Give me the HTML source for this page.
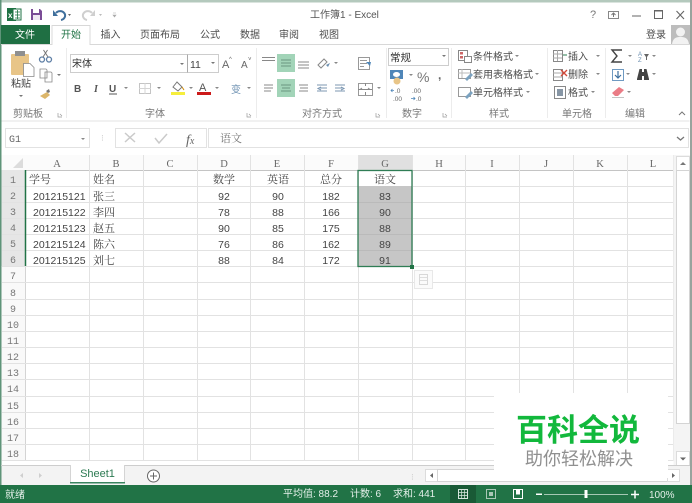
<!DOCTYPE html>
<html><head><meta charset="utf-8"><style>
html,body{margin:0;padding:0;background:#fff;width:692px;height:503px;overflow:hidden}
svg{display:block;position:absolute;left:0;top:0;filter:blur(.35px)}
text{font-family:"Liberation Sans","Noto Sans CJK SC",sans-serif;font-size:10px;fill:#4c4c4c}
.r{font-family:"Liberation Serif","Noto Serif CJK SC",serif;font-size:11px;fill:#444}
.n{font-family:"Liberation Sans",sans-serif;font-size:10.5px;fill:#444}
.h{font-family:"Liberation Serif","Noto Serif CJK SC",serif;font-size:10.5px;fill:#666;text-anchor:middle}
.rh{font-family:"Liberation Mono",monospace;font-size:10px;fill:#777;text-anchor:middle}
.m{text-anchor:middle}
.g{stroke:#e2e2e2;stroke-width:1}
</style></head><body>
<svg width="692" height="503" viewBox="0 0 692 503">
<rect width="692" height="503" fill="#fff"/>
<rect x="0" y="0" width="692" height="2.5" fill="#b4c9bd"/>
<rect x="0" y="0" width="1.5" height="503" fill="#5f9479"/>
<rect x="690" y="0" width="2" height="503" fill="#98a39d"/>

<!-- QAT -->
<rect x="7" y="8" width="9" height="13" fill="#1f7244"/><rect x="13" y="9" width="8" height="11" fill="#fff" stroke="#1f7244"/>
<path d="M15 12h5M15 15h5M15 18h5M17.500 10v9" stroke="#1f7244" stroke-width=".8"/>
<text x="8" y="18" style="font-size:8px;font-weight:bold;fill:#fff">x</text>
<path d="M31 9h9l2 2v9H31z" fill="#7a4c96"/><rect x="33" y="9" width="6" height="4" fill="#fff"/><rect x="33" y="15" width="7" height="5" fill="#efe8f3"/>
<path d="M56 13a5 4.500 0 1 1 5 7" fill="none" stroke="#3f6f9c" stroke-width="2"/><path d="M53 10v6h5z" fill="#3f6f9c"/>
<path d="M68 14l3 0-1.500 2z" fill="#666"/>
<path d="M92 13a5 4.500 0 1 0-5 7" fill="none" stroke="#cfcfcf" stroke-width="2"/><path d="M95 10v6h-5z" fill="#cfcfcf"/>
<path d="M99 14l3 0-1.500 2z" fill="#bbb"/>
<path d="M113 13h3M113 15l3 0-1.500 2z" stroke="#aaa" stroke-width=".6" fill="#aaa"/>
<text x="310" y="18" style="font-size:10px;fill:#555">工作簿1 - Excel</text>

<!-- window controls -->
<text x="590" y="18" style="font-size:11px;fill:#777">?</text>
<rect x="608.500" y="11.500" width="10" height="7" fill="none" stroke="#888"/><path d="M613.500 17v-4M611.500 15l2-2 2 2" fill="none" stroke="#777"/>
<rect x="632" y="15.500" width="9" height="1" fill="#666"/>
<rect x="654.500" y="10.500" width="8" height="8" fill="none" stroke="#666"/><rect x="654" y="10" width="9" height="1.500" fill="#666"/>
<path d="M676.500 11l7.500 8M684 11l-7.500 8" stroke="#666" stroke-width="1.100"/>

<!-- tabs -->
<rect x="1" y="25" width="49" height="20" fill="#1f6f43"/>
<text x="25" y="38" class="m" style="fill:#fff">文件</text>
<path d="M52 45V25.500H90V45" fill="#fff" stroke="#d8d8d8"/>
<line x1="1" y1="44.500" x2="52" y2="44.500" stroke="#d8d8d8"/><line x1="90" y1="44.500" x2="690" y2="44.500" stroke="#d8d8d8"/>
<text x="71" y="38" class="m" style="fill:#217346">开始</text>
<text x="110.500" y="38" class="m">插入</text>
<text x="160" y="38" class="m">页面布局</text>
<text x="210" y="38" class="m">公式</text>
<text x="250" y="38" class="m">数据</text>
<text x="289" y="38" class="m">审阅</text>
<text x="329" y="38" class="m">视图</text>
<text x="656" y="38" class="m">登录</text>
<rect x="671" y="25" width="19" height="19" fill="#bdbdbd"/>
<circle cx="680.500" cy="32" r="4.500" fill="#f2f2f2"/><path d="M672 44c1-6 4-7 8.500-7s7.500 1 8.500 7z" fill="#f2f2f2"/>

<!-- ribbon -->
<rect x="1.500" y="120" width="688" height="2" fill="#f1f1f1"/>
<g stroke="#ececec"><line x1="66.500" y1="48" x2="66.500" y2="118"/><line x1="256.500" y1="48" x2="256.500" y2="118"/><line x1="386.500" y1="48" x2="386.500" y2="118"/><line x1="451.500" y1="48" x2="451.500" y2="118"/><line x1="547.500" y1="48" x2="547.500" y2="118"/><line x1="605.500" y1="48" x2="605.500" y2="118"/></g>

<!-- clipboard -->
<rect x="11" y="54" width="18" height="21" rx="1" fill="#e8c588"/>
<rect x="15" y="51" width="10" height="5" fill="#8f8f8f"/>
<path d="M23.500 63.500h6.500l4 4v9H23.500z" fill="#fff" stroke="#888" stroke-width=".8"/>
<text x="21" y="87" class="m" style="fill:#444">粘贴</text>
<path d="M19 95l4 0-2 2z" fill="#777"/>
<circle cx="42" cy="59.500" r="2.500" fill="none" stroke="#5e7fa5" stroke-width="1.300"/><circle cx="49" cy="59.500" r="2.500" fill="none" stroke="#5e7fa5" stroke-width="1.300"/>
<path d="M43 57l4.500-7M48 57l-4.500-7" stroke="#777" stroke-width="1"/>
<path d="M40 69h6l1 1v8h-7z M45 72h6l1 1v9h-7z" fill="#fff" stroke="#888" stroke-width=".8"/>
<path d="M57 74l4 0-2 2z" fill="#777"/>
<path d="M40 96l7-4 3 3-5 4z" fill="#dcb66a"/><path d="M46 91l3-2 1 3-2 1z" fill="#777"/>
<text x="28" y="117" class="m" style="fill:#777">剪贴板</text>
<path d="M58 113v4h4M60 114l2 2" fill="none" stroke="#999" stroke-width=".7"/>

<!-- font -->
<rect x="70.500" y="54.500" width="148" height="18" fill="#fff" stroke="#cdcdcd"/>
<line x1="187.500" y1="54.500" x2="187.500" y2="72.500" stroke="#aaa"/>
<text x="72" y="67" style="font-size:10px;fill:#333">宋体</text>
<path d="M180 63l4 0-2 2z" fill="#777"/>
<text x="190" y="68" style="font-size:10.500px;fill:#444">11</text>
<path d="M211 62l4 0-2 2z" fill="#777"/>
<text x="222" y="68" style="font-size:11px;fill:#666">A</text><text x="229" y="61" style="font-size:6px;fill:#666">^</text>
<text x="241" y="68" style="font-size:10px;fill:#666">A</text><text x="248" y="61" style="font-size:6px;fill:#666">˅</text>
<text x="74" y="92" style="font-size:10px;font-weight:bold;fill:#555">B</text>
<text x="94" y="92" style="font-size:10px;font-style:italic;fill:#555;font-family:'Liberation Serif',serif;font-weight:bold">I</text>
<text x="109" y="92" style="font-size:10px;fill:#555;font-weight:bold">U</text><line x1="109" y1="94" x2="117" y2="94" stroke="#555"/>
<path d="M124 87l4 0-2 2z" fill="#888"/>
<rect x="139.500" y="83.500" width="11" height="10" fill="none" stroke="#c4c4c4"/><path d="M145 83v11M139 88.500h12" stroke="#d4d4d4"/>
<path d="M157 87l4 0-2 2z" fill="#888"/>
<path d="M177 82l5 5-4 4-5-4z" fill="none" stroke="#777"/><path d="M182 87l2 3" stroke="#c80" stroke-width="1"/>
<rect x="171" y="92" width="14" height="3" fill="#f6ee3c"/>
<path d="M189 87l4 0-2 2z" fill="#888"/>
<text x="199" y="91" style="font-size:11px;fill:#555">A</text>
<rect x="197" y="92" width="14" height="3" fill="#cc1a1a"/>
<path d="M215 87l4 0-2 2z" fill="#888"/>
<text x="231" y="93" style="font-size:10px;fill:#6b8fb0">变</text>
<path d="M247 87l4 0-2 2z" fill="#888"/>
<text x="155" y="117" class="m" style="fill:#777">字体</text>
<path d="M247 113v4h4M249 114l2 2" fill="none" stroke="#999" stroke-width=".7"/>

<!-- alignment -->
<rect x="277" y="54" width="18" height="18" fill="#a2d4b8"/>
<rect x="277" y="79" width="18" height="18" fill="#a2d4b8"/>
<g stroke="#888" stroke-width="1" fill="none">
<path d="M262 57.500h13M262 60.500h13"/>
<path d="M298 62h11M298 65h11M298 68h11"/>
<path d="M264 85h9M264 88h9M264 91h7"/>
<path d="M299 85h9M300 88h8M299 91h9"/>
</g>
<g stroke="#6a9680" stroke-width="1" fill="none"><path d="M281 60h10M281 63h10M281 66h10"/><path d="M281 85h10M282 88h8M281 91h10"/></g>
<path d="M318 65l6-6 3 3-6 6z" fill="none" stroke="#888"/><path d="M326 65l4-2-2 4z" fill="#6b8fb0"/>
<path d="M334 62l4 0-2 2z" fill="#888"/>
<g stroke="#7c97b2" fill="none"><path d="M317 85h10M320 88h7M317 91h10M321 87l-3 1.500 3 1.500"/><path d="M335 85h10M335 88h7M335 91h10M341 87l3 1.500-3 1.500"/></g>
<rect x="358.500" y="57.500" width="11" height="12" fill="#fff" stroke="#999"/><path d="M360 60.500h7M360 63.500h7M360 66.500h4" stroke="#999"/><path d="M366 62h5l-1 4z" fill="#4f86b8"/>
<rect x="358.500" y="83.500" width="14" height="12" fill="#fff" stroke="#999"/><path d="M358 89.500h14M360 89.500l2-1.500M370 89.500l-2-1.500M365.500 83v3M365.500 92v3" stroke="#888"/>
<path d="M377 87l4 0-2 2z" fill="#888"/>
<text x="322" y="117" class="m" style="fill:#777">对齐方式</text>
<path d="M376 113v4h4M378 114l2 2" fill="none" stroke="#999" stroke-width=".7"/>

<!-- number -->
<rect x="388.500" y="48.500" width="60" height="17" fill="#fff" stroke="#cdcdcd"/>
<text x="390" y="61" style="font-size:10.500px;fill:#333">常规</text>
<path d="M442 55l4 0-2 2z" fill="#777"/>
<rect x="390" y="70" width="13" height="9" fill="#4f86b8"/><ellipse cx="396.500" cy="74.500" rx="3.500" ry="2.500" fill="#fff"/>
<circle cx="397" cy="81" r="3.500" fill="#e8c588"/>
<path d="M409 74l4 0-2 2z" fill="#888"/>
<text x="417" y="82" style="font-size:14px;fill:#777">%</text>
<text x="438" y="79" style="font-size:12px;font-weight:bold;fill:#666">,</text>
<path d="M391 90.500h3M392.500 89l-1.500 1.500 1.500 1.500" stroke="#4f86b8" fill="none" stroke-width=".8"/>
<text x="395" y="93" style="font-size:6.500px;fill:#666">.0</text><text x="393" y="101" style="font-size:6.500px;fill:#666">.00</text>
<text x="412" y="93" style="font-size:6.500px;fill:#666">.00</text><text x="416" y="101" style="font-size:6.500px;fill:#666">.0</text>
<path d="M411 98.500h4M413.500 97l1.500 1.500-1.500 1.500" stroke="#4f86b8" fill="none" stroke-width=".8"/>
<text x="412" y="117" class="m" style="fill:#777">数字</text>
<path d="M443 113v4h4M445 114l2 2" fill="none" stroke="#999" stroke-width=".7"/>

<!-- styles -->
<rect x="458.500" y="50.500" width="9" height="10" fill="#fff" stroke="#888"/><rect x="460" y="52" width="3" height="2.500" fill="#c66"/><rect x="460" y="56" width="3" height="2.500" fill="#c66"/><rect x="464.500" y="56.500" width="7" height="6" fill="#fff" stroke="#888"/>
<text x="473" y="60" style="font-size:10px">条件格式</text><path d="M515 55l4 0-2 2z" fill="#888"/>
<rect x="458.500" y="69.500" width="12" height="9" fill="#fff" stroke="#999"/><path d="M458 73h12M462 69v9" stroke="#bbb"/><path d="M465 79l6-6 2 2-6 6z" fill="#7ba2c0"/>
<text x="473" y="78" style="font-size:10px">套用表格格式</text><path d="M535 73l4 0-2 2z" fill="#888"/>
<rect x="458.500" y="87.500" width="12" height="9" fill="#fff" stroke="#999"/><path d="M465 97l6-6 2 2-6 6z" fill="#7ba2c0"/>
<text x="473" y="96" style="font-size:10px">单元格样式</text><path d="M526 91l4 0-2 2z" fill="#888"/>
<text x="499" y="117" class="m" style="fill:#777">样式</text>

<!-- cells -->
<rect x="553.500" y="50.500" width="9" height="11" fill="#fff" stroke="#888"/><path d="M553 54h9M553 58h9M557.500 50v11" stroke="#aaa"/><path d="M563 55h4" stroke="#5c9a78" stroke-width="1.300"/>
<text x="568" y="60" style="font-size:10px">插入</text><path d="M596 55l4 0-2 2z" fill="#888"/>
<rect x="553.500" y="69.500" width="9" height="11" fill="#fff" stroke="#888"/><path d="M553 73h9M553 77h9" stroke="#aaa"/><path d="M561 70l6 6M567 70l-6 6" stroke="#d3493a" stroke-width="1.400"/>
<text x="568" y="78" style="font-size:10px">删除</text><path d="M596 73l4 0-2 2z" fill="#888"/>
<rect x="554.500" y="86.500" width="11" height="12" fill="#fff" stroke="#888"/><rect x="557" y="89" width="6" height="7" fill="#8796a5"/>
<text x="568" y="96" style="font-size:10px">格式</text><path d="M591 91l4 0-2 2z" fill="#888"/>
<text x="577" y="117" class="m" style="fill:#777">单元格</text>

<!-- editing -->
<path d="M622 50h-10l5 6-5 6h10" fill="none" stroke="#444" stroke-width="1.400"/>
<path d="M628 55l4 0-2 2z" fill="#888"/>
<text x="638" y="56" style="font-size:6px;fill:#6b8fb0">A</text><text x="638" y="62" style="font-size:6px;fill:#6b8fb0">Z</text>
<path d="M644 54h5l-2 3v3h-1v-3z" fill="#666"/><path d="M652 55l4 0-2 2z" fill="#888"/>
<rect x="612.500" y="69.500" width="11" height="11" fill="#fff" stroke="#6f9ac2"/><path d="M618 71v7M615 75l3 3 3-3" fill="none" stroke="#3c6f9e" stroke-width="1.200"/>
<path d="M626 73l4 0-2 2z" fill="#888"/>
<path d="M637 79l2.500-10h2.500v3h2v-3h2.500l2.500 10v1h-5v-4h-2v4h-5z" fill="#444"/><path d="M652 73l4 0-2 2z" fill="#888"/>
<path d="M612 93l7-6 5 3-6 6h-3z" fill="#ea7c86"/><line x1="612" y1="97.500" x2="624" y2="97.500" stroke="#c4c4c4"/>
<path d="M627 91l4 0-2 2z" fill="#888"/>
<text x="635" y="117" class="m" style="fill:#777">编辑</text>
<path d="M679 115l3-3 3 3" fill="none" stroke="#777"/>

<!-- formula bar -->
<rect x="5.500" y="128.500" width="84" height="19" fill="#fff" stroke="#e2e2e2"/>
<text x="9" y="142" style="font-family:'Liberation Mono',monospace;font-size:10px;fill:#666">G1</text>
<path d="M81 138l4 0-2 2z" fill="#888"/>
<text x="101" y="141" style="font-size:9px;fill:#ccc">⁝</text>
<rect x="115.500" y="128.500" width="91" height="19" fill="#fff" stroke="#e2e2e2"/>
<path d="M125 133l10 9M135 133l-10 9" stroke="#cacaca" stroke-width="1.500"/>
<path d="M155 138l4 5 8-9" fill="none" stroke="#cacaca" stroke-width="1.500"/>
<text x="186" y="144" style="font-family:'Liberation Serif',serif;font-style:italic;font-size:14px;fill:#666">f<tspan style="font-size:10px">x</tspan></text>
<rect x="208.500" y="128.500" width="480" height="19" fill="#fff" stroke="#e2e2e2"/>
<text x="220" y="142" style="font-family:'Noto Serif CJK SC',serif;font-size:11px;fill:#777">语文</text>
<path d="M677 137l3.500 3 3.500-3" fill="none" stroke="#777" stroke-width="1.300"/>

<!-- sheet headers -->
<rect x="1.500" y="155" width="672" height="15" fill="#fbfbfb"/>
<rect x="1.500" y="170" width="24" height="291" fill="#f9f9f9"/>
<rect x="1.500" y="170" width="24" height="96" fill="#e6e6e6"/>
<rect x="358" y="155" width="54" height="15" fill="#e0e0e0"/>
<path d="M23 158v10h-10z" fill="#dcdcdc"/>
<line x1="25" y1="170.500" x2="673" y2="170.500" stroke="#c4c4c4"/>
<line x1="25.500" y1="170" x2="25.500" y2="461" stroke="#d4d4d4"/>

<!-- grid -->
<g class="g">
<line x1="89.500" y1="155" x2="89.500" y2="461"/><line x1="143.500" y1="155" x2="143.500" y2="461"/><line x1="197.500" y1="155" x2="197.500" y2="461"/><line x1="250.500" y1="155" x2="250.500" y2="461"/><line x1="304.500" y1="155" x2="304.500" y2="461"/><line x1="358.500" y1="155" x2="358.500" y2="461"/><line x1="412.500" y1="155" x2="412.500" y2="461"/><line x1="465.500" y1="155" x2="465.500" y2="461"/><line x1="519.500" y1="155" x2="519.500" y2="461"/><line x1="573.500" y1="155" x2="573.500" y2="461"/><line x1="627.500" y1="155" x2="627.500" y2="461"/><line x1="673.500" y1="155" x2="673.500" y2="461"/>
<line x1="2" y1="186.500" x2="673" y2="186.500"/><line x1="2" y1="202.500" x2="673" y2="202.500"/><line x1="2" y1="218.500" x2="673" y2="218.500"/><line x1="2" y1="234.500" x2="673" y2="234.500"/><line x1="2" y1="250.500" x2="673" y2="250.500"/><line x1="2" y1="266.500" x2="673" y2="266.500"/><line x1="2" y1="282.500" x2="673" y2="282.500"/><line x1="2" y1="299.500" x2="673" y2="299.500"/><line x1="2" y1="315.500" x2="673" y2="315.500"/><line x1="2" y1="331.500" x2="673" y2="331.500"/><line x1="2" y1="347.500" x2="673" y2="347.500"/><line x1="2" y1="363.500" x2="673" y2="363.500"/><line x1="2" y1="379.500" x2="673" y2="379.500"/><line x1="2" y1="396.500" x2="673" y2="396.500"/><line x1="2" y1="412.500" x2="673" y2="412.500"/><line x1="2" y1="428.500" x2="673" y2="428.500"/><line x1="2" y1="444.500" x2="673" y2="444.500"/><line x1="2" y1="460.500" x2="673" y2="460.500"/>
</g>
<line x1="25.500" y1="170" x2="25.500" y2="266" stroke="#217346" stroke-width="1.500"/>

<!-- selection -->
<rect x="358" y="186" width="54" height="80" fill="#c6c6c6"/>
<g stroke="#bababa"><line x1="358" y1="202.500" x2="412" y2="202.500"/><line x1="358" y1="218.500" x2="412" y2="218.500"/><line x1="358" y1="234.500" x2="412" y2="234.500"/><line x1="358" y1="250.500" x2="412" y2="250.500"/></g>
<rect x="358" y="170.500" width="54" height="96" fill="none" stroke="#2f7d55" stroke-width="1.300"/>
<rect x="410" y="265" width="4" height="4" fill="#217346"/>

<!-- col headers -->
<text class="h" x="57" y="167">A</text><text class="h" x="116" y="167">B</text><text class="h" x="170" y="167">C</text><text class="h" x="224" y="167">D</text><text class="h" x="277" y="167">E</text><text class="h" x="331" y="167">F</text><text class="h" x="385" y="167">G</text><text class="h" x="439" y="167">H</text><text class="h" x="492" y="167">I</text><text class="h" x="546" y="167">J</text><text class="h" x="600" y="167">K</text><text class="h" x="653" y="167">L</text>

<!-- row headers -->
<text class="rh" x="13" y="183">1</text><text class="rh" x="13" y="199">2</text><text class="rh" x="13" y="215">3</text><text class="rh" x="13" y="231">4</text><text class="rh" x="13" y="247">5</text><text class="rh" x="13" y="263">6</text><text class="rh" x="13" y="279">7</text><text class="rh" x="13" y="296">8</text><text class="rh" x="13" y="312">9</text><text class="rh" x="13" y="328">10</text><text class="rh" x="13" y="344">11</text><text class="rh" x="13" y="360">12</text><text class="rh" x="13" y="376">13</text><text class="rh" x="13" y="392">14</text><text class="rh" x="13" y="409">15</text><text class="rh" x="13" y="425">16</text><text class="rh" x="13" y="441">17</text><text class="rh" x="13" y="457">18</text>

<!-- data -->
<text class="r" x="29" y="183">学号</text><text class="r" x="93" y="183">姓名</text>
<text class="r m" x="224" y="183">数学</text><text class="r m" x="278" y="183">英语</text><text class="r m" x="331" y="183">总分</text><text class="r m" x="385" y="183">语文</text>
<text class="n" x="33" y="200">201215121</text><text class="r" x="93" y="200">张三</text>
<text class="n" x="33" y="216">201215122</text><text class="r" x="93" y="216">李四</text>
<text class="n" x="33" y="232">201215123</text><text class="r" x="93" y="232">赵五</text>
<text class="n" x="33" y="248">201215124</text><text class="r" x="93" y="248">陈六</text>
<text class="n" x="33" y="264">201215125</text><text class="r" x="93" y="264">刘七</text>
<text class="n m" x="224" y="200">92</text><text class="n m" x="278" y="200">90</text><text class="n m" x="331" y="200">182</text><text class="n m" x="385" y="200">83</text>
<text class="n m" x="224" y="216">78</text><text class="n m" x="278" y="216">88</text><text class="n m" x="331" y="216">166</text><text class="n m" x="385" y="216">90</text>
<text class="n m" x="224" y="232">90</text><text class="n m" x="278" y="232">85</text><text class="n m" x="331" y="232">175</text><text class="n m" x="385" y="232">88</text>
<text class="n m" x="224" y="248">76</text><text class="n m" x="278" y="248">86</text><text class="n m" x="331" y="248">162</text><text class="n m" x="385" y="248">89</text>
<text class="n m" x="224" y="264">88</text><text class="n m" x="278" y="264">84</text><text class="n m" x="331" y="264">172</text><text class="n m" x="385" y="264">91</text>

<!-- paste options -->
<rect x="414.500" y="270.500" width="18" height="18" fill="#fbfbfb" stroke="#e8e8e8"/>
<rect x="419.500" y="274.500" width="8" height="10" fill="none" stroke="#d8d8d8"/><path d="M420 277.500h7M420 280.500h7" stroke="#dedede"/>

<!-- v scrollbar -->
<rect x="673.500" y="155" width="16.500" height="310" fill="#f4f4f4"/>
<rect x="676.500" y="156.500" width="13" height="14" fill="#fff" stroke="#dcdcdc"/>
<path d="M680 165l3-3 3 3z" fill="#777"/>
<rect x="676.500" y="170.500" width="13" height="253" fill="#fff" stroke="#d4d4d4"/>
<rect x="676.500" y="451.500" width="13" height="14" fill="#fff" stroke="#dcdcdc"/>
<path d="M680 457.500l3 3 3-3z" fill="#666"/>

<!-- sheet tab bar -->
<rect x="1.500" y="465" width="688.500" height="20" fill="#f3f3f3"/>
<line x1="1" y1="465.500" x2="690" y2="465.500" stroke="#cdcdcd"/>
<path d="M70.500 465V482.500H124.500V465" fill="#fff" stroke="#d4d4d4"/>
<rect x="70" y="482" width="55" height="1.500" fill="#3a8560"/>
<text x="97.500" y="477" class="m" style="font-size:11px;fill:#2c7a52">Sheet1</text>
<path d="M23 473l-3 2.500 3 2.500zM39 473l3 2.500-3 2.500z" fill="#cfcfcf"/>
<circle cx="153.500" cy="476" r="6" fill="#fff" stroke="#666"/><path d="M150 476h7M153.500 472.500v7" stroke="#666"/>
<text x="411" y="480" style="font-size:9px;fill:#ccc">⁝</text>
<rect x="425.500" y="469.500" width="12" height="12" fill="#fff" stroke="#dcdcdc"/><path d="M433 473l-3 2.500 3 2.500z" fill="#666"/>
<rect x="437.500" y="469.500" width="230" height="12" fill="#fff" stroke="#d4d4d4"/>
<rect x="667.500" y="469.500" width="12" height="12" fill="#fff" stroke="#dcdcdc"/><path d="M666 473l3 2.500-3 2.500z" transform="translate(6 0)" fill="#666"/>

<!-- watermark -->
<rect x="494" y="393" width="174" height="85" fill="#fff"/>
<rect x="494" y="478" width="146" height="3" fill="#fff"/>
<text x="578" y="441" class="m" style="font-size:31px;font-weight:bold;fill:#12b83c">百科全说</text>
<text x="579" y="465" class="m" style="font-size:18px;fill:#909090">助你轻松解决</text>

<!-- status bar -->
<rect x="0" y="485" width="692" height="18" fill="#217346"/>
<text x="5" y="498" style="fill:#e4efe9">就绪</text>
<text x="283" y="497" style="font-size:10px;fill:#e4efe9">平均值: 88.2</text>
<text x="350" y="497" style="font-size:10px;fill:#e4efe9">计数: 6</text>
<text x="393" y="497" style="font-size:10px;fill:#e4efe9">求和: 441</text>
<rect x="450" y="485" width="26" height="18" fill="#195a36"/>
<rect x="458.500" y="489.500" width="9" height="9" fill="none" stroke="#d6e5dc"/><path d="M458 492.500h9M458 495.500h9M461.500 489v9M464.500 489v9" stroke="#d6e5dc" stroke-width=".7"/>
<rect x="486.500" y="489.500" width="9" height="9" fill="none" stroke="#a9c7b6"/><rect x="489" y="492" width="4" height="4" fill="#a9c7b6"/>
<rect x="513.500" y="489.500" width="9" height="9" fill="none" stroke="#fff"/><rect x="516" y="489.500" width="4" height="5" fill="#fff"/>
<rect x="536" y="493.500" width="6" height="1.500" fill="#fff"/>
<rect x="544" y="494" width="84" height="1" fill="#a6c8b4"/>
<rect x="584.500" y="490" width="3" height="8" fill="#fff"/>
<path d="M631 494.500h8M635 490.500v8" stroke="#fff" stroke-width="1.500"/>
<text x="649" y="498" style="font-size:10px;fill:#e4efe9">100%</text>
</svg>
</body></html>
